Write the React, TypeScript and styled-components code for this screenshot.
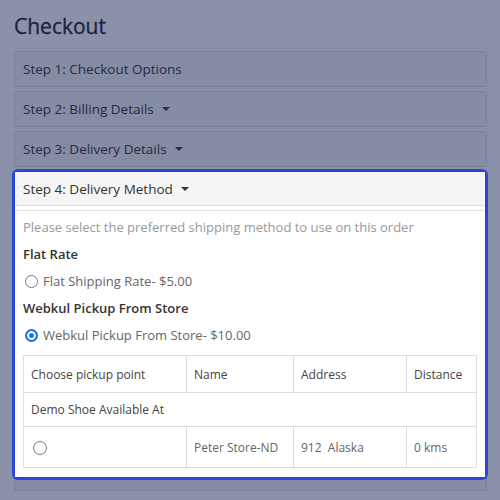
import React from "react";
import styled, { createGlobalStyle } from "styled-components";

const Global = createGlobalStyle`
  html, body { margin: 0; padding: 0; background: #fff; }
  body { font-family: "Open Sans", "Liberation Sans", sans-serif; color: #333; }
  * { box-sizing: border-box; }
`;

const Page = styled.div`
  position: relative;
  width: 500px;
  height: 500px;
  overflow: hidden;
  padding: 0 13px 0 14px;
`;

const Title = styled.h1`
  margin: 0;
  padding: 12px 0 0 0;
  height: 51px;
  font-size: 21px;
  font-weight: 400;
  color: #1e2330;
  line-height: 28px;
  -webkit-text-stroke: 0.3px #1e2330;
`;

const Group = styled.div`
  display: flex;
  flex-direction: column;
  gap: 4px;
`;

const Panel = styled.div<{ $last?: boolean }>`
  border: 1px solid #ddd;
  border-radius: 2px;
  background: #f5f5f5;
  padding-bottom: ${(p) => (p.$last ? "13px" : "0")};
`;

const Heading = styled.div`
  height: 34px;
  display: flex;
  align-items: center;
  padding: 0 8px;
  font-size: 13.5px;
  font-weight: 400;
  color: #333;
  background: #f5f5f5;
  border-bottom: 1px solid #ddd;
`;

const PlainHeading = styled(Heading)`
  border-bottom: none;
`;

const Caret = styled.span`
  display: inline-block;
  margin-left: 8px;
  width: 0;
  height: 0;
  border-left: 4px solid transparent;
  border-right: 4px solid transparent;
  border-top: 4px solid #333;
`;

const Overlay = styled.div`
  position: absolute;
  inset: 0;
  background: rgba(23, 36, 82, 0.5);
  z-index: 1;
  pointer-events: none;
`;

const Highlight = styled.div`
  position: relative;
  z-index: 2;
  background: #fff;
  border-radius: 3px;
  box-shadow: 0 0 0 3px #2a46d8;
  margin-right: 1px;
`;

const Body = styled.div`
  margin-top: 4px;
  border-top: 1px solid #e2e2e2;
  padding: 7px 8px 9px 8px;
  background: #fff;
`;

const Hint = styled.p`
  margin: 0;
  font-size: 13px;
  line-height: 19px;
  color: #999;
`;

const GroupLabel = styled.div`
  margin-top: 8px;
  font-size: 13px;
  line-height: 19px;
  font-weight: 600;
  color: #333;
`;

const Option = styled.label`
  display: flex;
  align-items: center;
  gap: 5px;
  margin-top: 8px;
  font-size: 13px;
  line-height: 19px;
  color: #666;
  padding-left: 2px;
`;

const Radio = styled.span<{ $checked?: boolean; $size?: number }>`
  display: inline-block;
  flex: none;
  width: ${(p) => p.$size ?? 13}px;
  height: ${(p) => p.$size ?? 13}px;
  border-radius: 50%;
  border: ${(p) => (p.$checked ? "2px solid #1a73e8" : "1.5px solid #777")};
  background: ${(p) => (p.$checked ? "#1a73e8" : "#fff")};
  box-shadow: ${(p) => (p.$checked ? "inset 0 0 0 2px #fff" : "none")};
  vertical-align: middle;
`;

const Table = styled.table`
  margin-top: 10px;
  width: 100%;
  border-collapse: collapse;
  font-size: 12px;
`;

const Th = styled.th`
  text-align: left;
  font-weight: 400;
  color: #444;
  border: 1px solid #ddd;
  height: 37px;
  padding: 0 7px;
`;

const Td = styled.td<{ $h?: number }>`
  color: #666;
  border: 1px solid #ddd;
  height: ${(p) => p.$h ?? 34}px;
  padding: 0 7px;
`;

const GroupCell = styled(Td)`
  color: #444;
`;

const RadioCell = styled(Td)`
  padding-left: 9px;
`;

export default function App() {
  return (
    <>
      <Global />
      <Page>
        <Title>Checkout</Title>
        <Group>
          <Panel>
            <PlainHeading>Step 1: Checkout Options</PlainHeading>
          </Panel>
          <Panel>
            <PlainHeading>
              Step 2: Billing Details <Caret />
            </PlainHeading>
          </Panel>
          <Panel>
            <PlainHeading>
              Step 3: Delivery Details <Caret />
            </PlainHeading>
          </Panel>
          <Panel $last>
            <Highlight>
              <Heading>
                Step 4: Delivery Method <Caret />
              </Heading>
              <Body>
                <Hint>Please select the preferred shipping method to use on this order</Hint>
                <GroupLabel>Flat Rate</GroupLabel>
                <Option>
                  <Radio />
                  Flat Shipping Rate- $5.00
                </Option>
                <GroupLabel>Webkul Pickup From Store</GroupLabel>
                <Option>
                  <Radio $checked />
                  Webkul Pickup From Store- $10.00
                </Option>
                <Table>
                  <thead>
                    <tr>
                      <Th style={{ width: 163 }}>Choose pickup point</Th>
                      <Th style={{ width: 107 }}>Name</Th>
                      <Th style={{ width: 113 }}>Address</Th>
                      <Th>Distance</Th>
                    </tr>
                  </thead>
                  <tbody>
                    <tr>
                      <GroupCell colSpan={4}>Demo Shoe Available At</GroupCell>
                    </tr>
                    <tr>
                      <RadioCell $h={41}>
                        <Radio $size={14} />
                      </RadioCell>
                      <Td $h={41}>Peter Store-ND</Td>
                      <Td $h={41}>912&nbsp; Alaska</Td>
                      <Td $h={41}>0 kms</Td>
                    </tr>
                  </tbody>
                </Table>
              </Body>
            </Highlight>
          </Panel>
        </Group>
        <Overlay />
      </Page>
    </>
  );
}
